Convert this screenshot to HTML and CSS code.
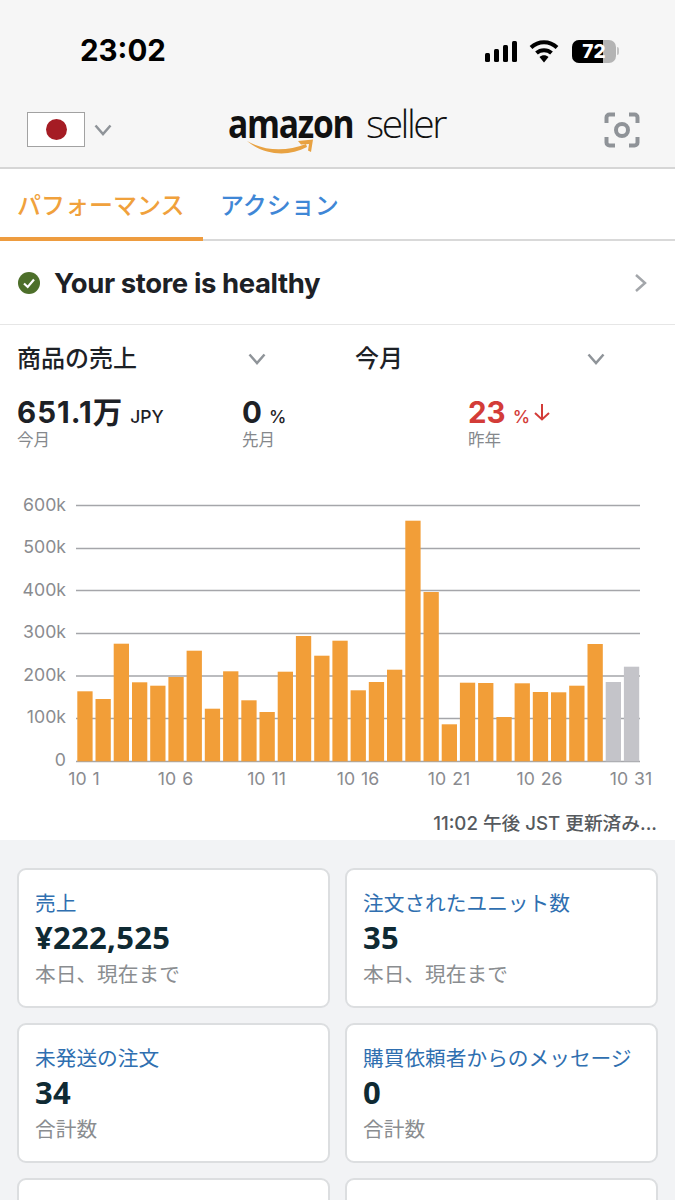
FILE: index.html
```html
<!DOCTYPE html>
<html lang="ja">
<head>
<meta charset="utf-8">
<title>Amazon Seller</title>
<link rel="stylesheet" href="styles.css">
</head>
<body>
<div class="app">
  <header class="top">
    <div class="status">
      <span class="time">23:02</span>
      <div class="status-icons">
        <svg class="signal" width="34" height="22" viewBox="0 0 34 22"><rect x="1" y="13" width="5" height="9" rx="1.5"/><rect x="10" y="9" width="5" height="13" rx="1.5"/><rect x="19" y="5" width="5" height="17" rx="1.5"/><rect x="28" y="1" width="5" height="21" rx="1.5"/></svg>
        <svg class="wifi" width="30" height="24" viewBox="0 0 30 24"><path class="wifi-arc" d="M2 8.500C9.500 1.500 20.500 1.500 28 8.500"/><path class="wifi-arc" d="M7.500 14C11.700 10.200 18.300 10.200 22.500 14"/><path d="M15 23.500L10.500 18C13 15.800 17 15.800 19.500 18Z"/></svg>
        <div class="battery"><span class="battery-fill"></span><span class="battery-num">72</span></div>
        <span class="battery-nub"></span>
      </div>
    </div>
    <div class="brand">
      <div class="flag-picker">
        <div class="flag"><span class="sun"></span></div>
        <svg class="chev" width="18" height="12" viewBox="0 0 18 12"><path d="M1.500 1.500L9 10L16.500 1.500"/></svg>
      </div>
      <div class="logo">
        <div class="logo-text"><span class="logo-a">amazon</span><span class="logo-s">seller</span></div>
        <svg class="smile" width="70" height="18" viewBox="0 0 70 18"><path class="smile-fill" d="M1 2C18 12 40 13 60 5L61 8C42 18.500 17 16 1 2Z"/><path class="smile-fill" d="M52 2L67 0.500L65 13L62 11.500L63 5L55 5.500Z"/></svg>
      </div>
      <svg class="scan" width="36" height="36" viewBox="0 0 36 36"><path d="M2.500 11V5.500A3 3 0 0 1 5.500 2.500H11M25 2.500H30.500A3 3 0 0 1 33.500 5.500V11M33.500 25V30.500A3 3 0 0 1 30.500 33.500H25M11 33.500H5.500A3 3 0 0 1 2.500 30.500V25"/><circle cx="18" cy="18" r="6"/></svg>
    </div>
  </header>

  <nav class="tabs">
    <div class="tab tab-active">パフォーマンス</div>
    <div class="tab tab-next">アクション</div>
  </nav>

  <div class="health">
    <svg class="ok" width="22" height="22" viewBox="0 0 22 22"><circle cx="11" cy="11" r="11"/><path d="M6 11.500L9.700 15L16 7.500"/></svg>
    <span class="health-text">Your store is healthy</span>
    <svg class="go" width="13" height="20" viewBox="0 0 13 20"><path d="M2 2L11 10L2 18"/></svg>
  </div>

  <section class="metrics">
    <div class="selects">
      <div class="select select-a"><span>商品の売上</span><svg class="chev" width="18" height="12" viewBox="0 0 18 12"><path d="M1.500 1.500L9 10L16.500 1.500"/></svg></div>
      <div class="select select-b"><span>今月</span><svg class="chev" width="18" height="12" viewBox="0 0 18 12"><path d="M1.500 1.500L9 10L16.500 1.500"/></svg></div>
    </div>
    <div class="stats">
      <div class="stat stat-1"><div class="stat-val"><b class="wide">651.1万</b><small>JPY</small></div><div class="stat-sub">今月</div></div>
      <div class="stat stat-2"><div class="stat-val"><b>0</b><small>%</small></div><div class="stat-sub">先月</div></div>
      <div class="stat"><div class="stat-val down"><b>23</b><small>%</small><svg class="arrow" width="18" height="18" viewBox="0 0 18 18"><path d="M9 1V16.500M2 10L9 16.500L16 10"/></svg></div><div class="stat-sub">昨年</div></div>
    </div>
  </section>

  <svg class="chart" width="675" height="320" viewBox="0 490 675 320">
    <g class="grid">
      <line x1="76" x2="640" y1="505.500" y2="505.500"/><line x1="76" x2="640" y1="548.500" y2="548.500"/><line x1="76" x2="640" y1="590.500" y2="590.500"/><line x1="76" x2="640" y1="633.500" y2="633.500"/><line x1="76" x2="640" y1="676" y2="676"/><line x1="76" x2="640" y1="718.500" y2="718.500"/><line x1="76" x2="640" y1="761.500" y2="761.500"/>
    </g>
    <g class="ylabels">
      <text x="66" y="510.500">600k</text><text x="66" y="553">500k</text><text x="66" y="595.500">400k</text><text x="66" y="638">300k</text><text x="66" y="680.500">200k</text><text x="66" y="723">100k</text><text x="66" y="765.500">0</text>
    </g>
    <g class="bars">
      <rect x="77.300" y="691.300" width="15.300" height="70"/>
      <rect x="95.500" y="699" width="15.300" height="62.300"/>
      <rect x="113.700" y="643.700" width="15.300" height="117.600"/>
      <rect x="132" y="682.300" width="15.300" height="79"/>
      <rect x="150.200" y="685.700" width="15.300" height="75.600"/>
      <rect x="168.400" y="677" width="15.300" height="84.300"/>
      <rect x="186.600" y="650.700" width="15.300" height="110.600"/>
      <rect x="204.800" y="708.700" width="15.300" height="52.600"/>
      <rect x="223.100" y="671.300" width="15.300" height="90"/>
      <rect x="241.300" y="700.300" width="15.300" height="61"/>
      <rect x="259.500" y="712" width="15.300" height="49.300"/>
      <rect x="277.700" y="671.700" width="15.300" height="89.600"/>
      <rect x="295.900" y="636" width="15.300" height="125.300"/>
      <rect x="314.200" y="655.700" width="15.300" height="105.600"/>
      <rect x="332.400" y="640.700" width="15.300" height="120.600"/>
      <rect x="350.600" y="690.300" width="15.300" height="71"/>
      <rect x="368.800" y="682" width="15.300" height="79.300"/>
      <rect x="387" y="669.700" width="15.300" height="91.600"/>
      <rect x="405.300" y="520.700" width="15.300" height="240.600"/>
      <rect x="423.500" y="592" width="15.300" height="169.300"/>
      <rect x="441.700" y="724.300" width="15.300" height="37"/>
      <rect x="459.900" y="682.700" width="15.300" height="78.600"/>
      <rect x="478.100" y="683" width="15.300" height="78.300"/>
      <rect x="496.400" y="717" width="15.300" height="44.300"/>
      <rect x="514.600" y="683.300" width="15.300" height="78"/>
      <rect x="532.800" y="692" width="15.300" height="69.300"/>
      <rect x="551" y="692.300" width="15.300" height="69"/>
      <rect x="569.200" y="685.700" width="15.300" height="75.600"/>
      <rect x="587.500" y="644" width="15.300" height="117.300"/>
      <rect class="bar-est" x="605.700" y="682" width="15.300" height="79.300"/>
      <rect class="bar-est" x="623.900" y="666.700" width="15.300" height="94.600"/>
    </g>
    <g class="xlabels">
      <text x="84" y="785">10 1</text><text x="175.500" y="785">10 6</text><text x="266.500" y="785">10 11</text><text x="358" y="785">10 16</text><text x="449" y="785">10 21</text><text x="539.500" y="785">10 26</text><text x="631" y="785">10 31</text>
    </g>
  </svg>

  <div class="updated">11:02 午後 JST 更新済み...</div>

  <section class="cards">
    <article class="card"><div class="card-title">売上</div><div class="card-val">¥222,525</div><div class="card-sub">本日、現在まで</div></article>
    <article class="card"><div class="card-title">注文されたユニット数</div><div class="card-val">35</div><div class="card-sub">本日、現在まで</div></article>
    <article class="card"><div class="card-title">未発送の注文</div><div class="card-val">34</div><div class="card-sub">合計数</div></article>
    <article class="card"><div class="card-title">購買依頼者からのメッセージ</div><div class="card-val">0</div><div class="card-sub">合計数</div></article>
    <article class="card"></article>
    <article class="card"></article>
  </section>
</div>
</body>
</html>
```

FILE: styles.css
```css
* { box-sizing: border-box; }
html, body { margin: 0; height: 1200px; overflow: hidden; background: #f2f3f5; }
body { font-family: "Inter", "Noto Sans CJK JP", sans-serif; color: #1d2126; }
svg { display: block; flex: none; }

.app { width: 675px; height: 1200px; overflow: hidden; display: flex; flex-direction: column; }

.top { height: 169px; background: #f6f6f6; border-bottom: 2px solid #d6d6d6; flex: none; }
.status { height: 100px; padding: 35px 56px 0 80px; display: flex; justify-content: space-between; align-items: flex-start; }
.time { font-size: 29.500px; font-weight: 700; line-height: 30px; color: #000; }
.status-icons { display: flex; align-items: center; margin-top: 4px; }
.signal { fill: #000; margin-right: 11px; }
.wifi { fill: #000; margin-right: 13px; }
.wifi-arc { fill: none; stroke: #000; stroke-width: 4; }
.battery { position: relative; width: 44px; height: 23px; border-radius: 7px; background: #b4b4b4; overflow: hidden; display: flex; align-items: center; justify-content: center; }
.battery-fill { position: absolute; left: 0; top: 0; bottom: 0; width: 31px; background: #000; }
.battery-num { position: relative; color: #fff; font-size: 19px; font-weight: 800; line-height: 23px; }
.battery-nub { width: 2px; height: 8px; margin-left: 1px; background: #c4c4c4; border-radius: 0 2px 2px 0; }

.brand { height: 67px; padding: 12px 35px 0 27px; display: flex; align-items: flex-start; }
.flag-picker { display: flex; align-items: center; gap: 9px; width: 201px; flex: none; }
.flag { width: 58px; height: 35px; flex: none; background: #fff; border: 1px solid #a2a2a2; display: flex; align-items: center; justify-content: center; }
.sun { width: 21px; height: 21px; border-radius: 50%; background: #a51c24; }
.chev { fill: none; stroke: #8f9499; stroke-width: 2.500; }
.logo { position: relative; flex: 1; height: 50px; margin-top: -9px; }
.logo-text { display: flex; align-items: baseline; white-space: nowrap; line-height: 40px; color: #111; }
.logo-a { display: inline-block; width: 138px; font-family: "Open Sans", sans-serif; font-weight: 700; font-size: 40px; letter-spacing: -1.500px; transform: scaleX(.84); transform-origin: left; }
.logo-s { font-family: "Open Sans", sans-serif; font-weight: 300; font-size: 39px; letter-spacing: -2.500px; }
.smile { position: absolute; left: 18px; top: 36px; }
.smile-fill { fill: #e8a242; }
.scan { fill: none; stroke: #8f9398; stroke-width: 4; }

.tabs { height: 72px; background: #fff; border-bottom: 2px solid #d9d9d9; display: flex; flex: none; }
.tab { height: 72px; padding: 21px 17px 0; font-size: 24px; font-weight: 500; line-height: 32px; }
.tab-active { width: 203px; color: #f0a13c; border-bottom: 4px solid #ee9c3f; }
.tab-next { color: #3f87d6; }

.health { height: 84px; flex: none; background: #fff; border-bottom: 1px solid #e6e6e6; display: flex; align-items: center; padding: 0 28px 0 18px; }
.ok { fill: #4d6f2a; }
.ok path { fill: none; stroke: #fff; stroke-width: 2.200; }
.health-text { flex: 1; margin-left: 14px; font-size: 27.500px; font-weight: 700; line-height: 32px; letter-spacing: -.4px; }
.go { fill: none; stroke: #a3a6aa; stroke-width: 2.500; }

.metrics { height: 165px; flex: none; background: #fff; padding: 16px 0 0 17px; }
.selects { display: flex; height: 36px; align-items: center; }
.select { display: flex; align-items: center; justify-content: space-between; font-size: 24px; font-weight: 500; line-height: 36px; }
.select-a { width: 249px; }
.select-b { width: 250px; margin-left: 89px; }
.stats { display: flex; margin-top: 19px; }
.stat { display: flex; flex-direction: column; }
.stat-1 { width: 225px; }
.stat-2 { width: 226px; }
.stat-val { display: flex; align-items: baseline; height: 32px; line-height: 32px; }
.stat-val b { font-size: 29.500px; font-weight: 700; }
.stat-val .wide { letter-spacing: 1px; }
.stat-val small { font-size: 17.500px; font-weight: 500; margin-left: 7px; }
.stat-sub { font-size: 16.500px; line-height: 24px; color: #85888c; }
.down { color: #d33c38; }
.arrow { fill: none; stroke: #d33c38; stroke-width: 2; margin-left: 3px; align-self: center; }

.chart { flex: none; background: #fff; }
.grid line { stroke: #a5a6aa; stroke-width: 1.500; }
.ylabels text { text-anchor: end; font-size: 17.700px; fill: #8a8b8f; }
.xlabels text { text-anchor: middle; font-size: 17.700px; word-spacing: 1px; fill: #8a8b8f; }
.bars rect { fill: #f29e38; }
.bars .bar-est { fill: #c4c4c9; }

.updated { height: 30px; flex: none; background: #fff; padding-right: 18px; text-align: right; font-size: 18.700px; font-weight: 500; line-height: 28px; color: #565a5e; }

.cards { padding: 28px 17px 0; display: grid; grid-template-columns: 313px 313px; gap: 15px 15px; grid-auto-rows: 140px; }
.card { background: #fff; border: 2px solid #dcdee0; border-radius: 9px; padding: 20px 16px 0; }
.card-title { font-size: 20.700px; line-height: 28px; color: #2f6fb0; white-space: nowrap; }
.card-val { font-family: "Open Sans", sans-serif; font-size: 31px; font-weight: 700; line-height: 38px; letter-spacing: .3px; color: #0f2a33; }
.card-sub { font-size: 20.700px; line-height: 30px; color: #8a8d90; margin-top: 4px; white-space: nowrap; }
```
